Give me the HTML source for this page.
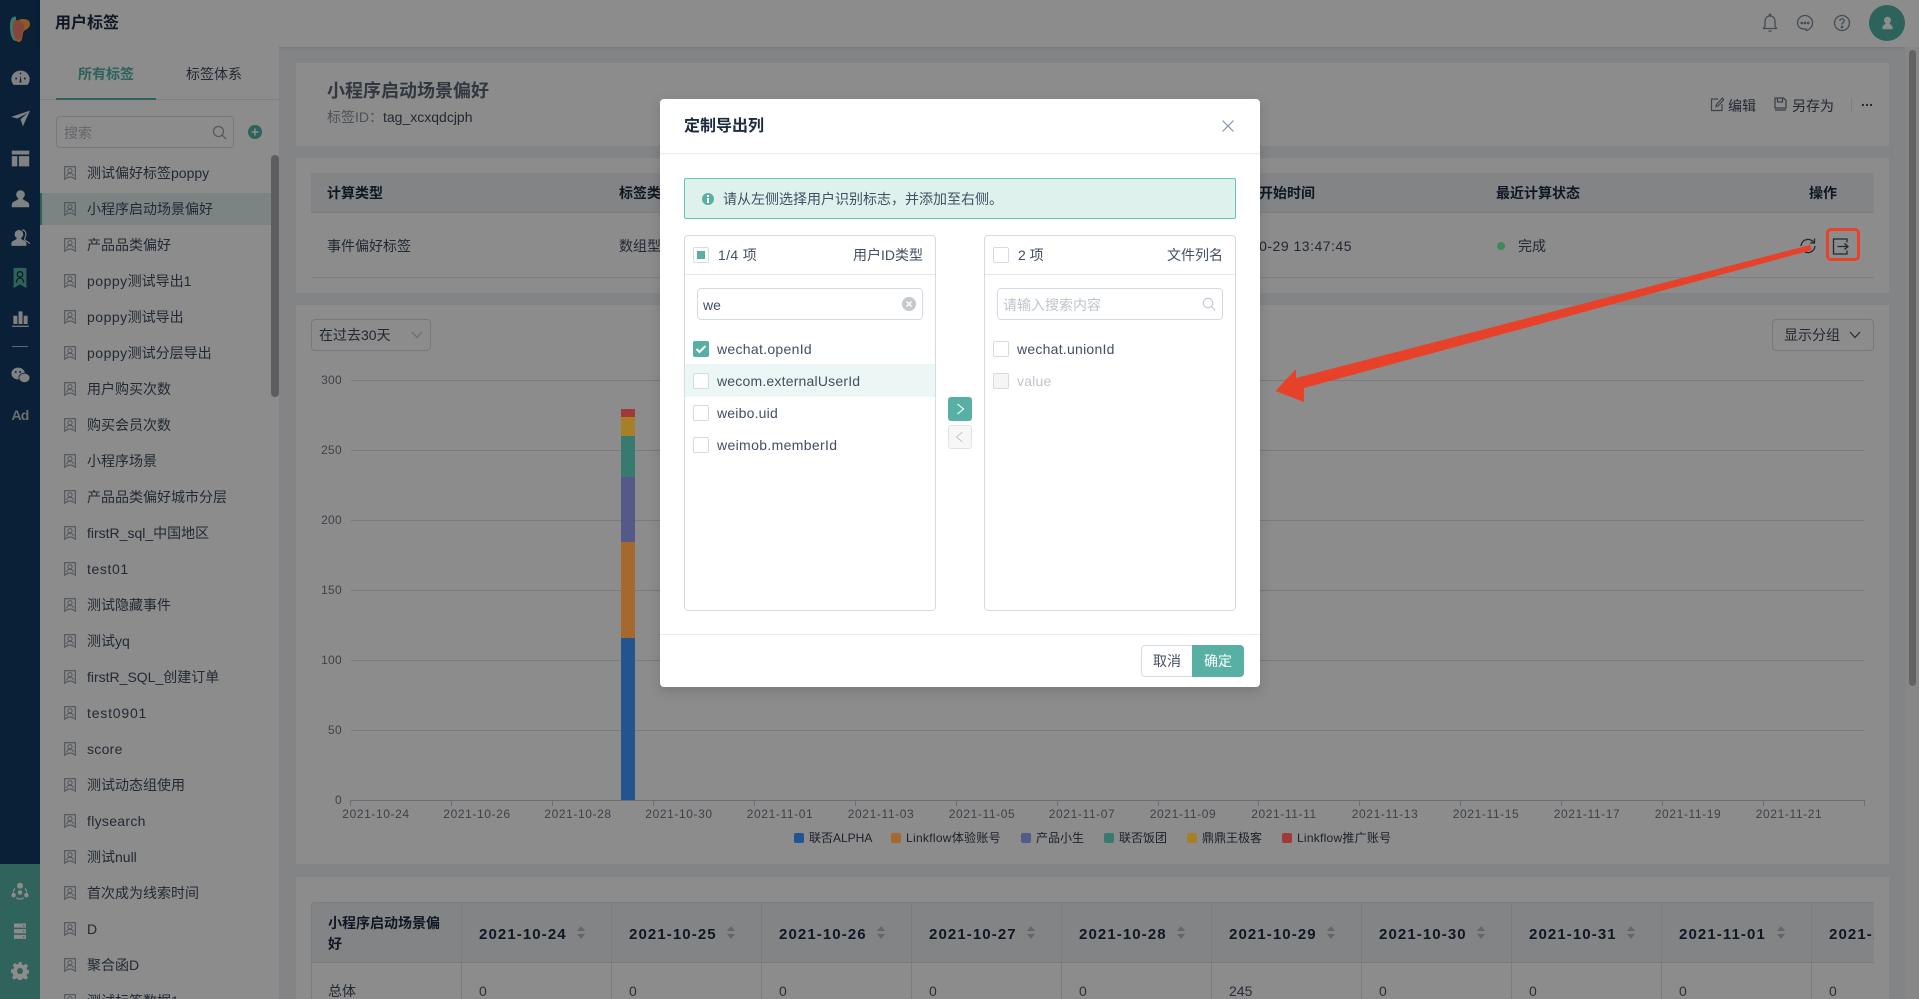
<!DOCTYPE html>
<html lang="zh"><head><meta charset="utf-8"><title>用户标签</title>
<style>
*{box-sizing:border-box}
html,body{margin:0;padding:0;width:1919px;height:999px;overflow:hidden;background:#eef1f5}
body{position:relative;font:14px/20px "Liberation Sans","Noto Sans CJK SC",sans-serif;color:#3f4a5c}
.a{position:absolute}
.t{position:absolute;white-space:nowrap;line-height:20px}
.b{font-weight:700;color:#1c2a3e}
.card{position:absolute;background:#fff}
.li{position:absolute;left:87px;white-space:nowrap;line-height:20px;color:#414d60}
.li span{letter-spacing:.5px}
.ic{position:absolute;left:64px;width:12px;height:14px}
.ax{position:absolute;top:804px;width:80px;text-align:center;font-size:12px;color:#6f7885;letter-spacing:.6px}
.yl{position:absolute;left:302px;width:40px;text-align:right;font-size:12px;color:#6f7885;letter-spacing:.3px;line-height:20px}
.grid{position:absolute;left:351px;width:1513px;height:1px;background:#dcdfe3}
.tick{position:absolute;top:800px;width:1px;height:6px;background:#c4c8ce}
.lg{position:absolute;top:828px;font-size:12px;line-height:20px;color:#333d4c;white-space:nowrap}
.lr{position:absolute;top:833px;width:10px;height:10px;border-radius:2px}
.th{position:absolute;top:902px;height:61px;width:150px;background:#eef1f5;border-left:1px solid #dfe3e8;border-bottom:1px solid #dfe3e8;border-top:1px solid #dfe3e8}
.th span{position:absolute;left:17px;top:22px;font-size:15px;font-weight:700;color:#1c2a3e;letter-spacing:1.1px;white-space:nowrap}
.th i{position:absolute;left:115px;top:23px;width:0;height:0;border:4.5px solid transparent;border-top:0;border-bottom:5px solid #b4b8be}
.th b{position:absolute;left:115px;top:31px;width:0;height:0;border:4.5px solid transparent;border-bottom:0;border-top:5px solid #b4b8be}
.td{position:absolute;top:963px;height:36px;width:150px;border-left:1px solid #dfe3e8}
.td span{position:absolute;left:17px;top:18px;color:#4a5568;line-height:20px}
.chk{position:absolute;width:16px;height:16px;border:1px solid #d5dbe3;border-radius:2px;background:#fff}
.m{color:#434f63}
.sic{position:absolute;left:10.5px;width:19px;height:19px}
</style></head><body>
<svg width="0" height="0" style="position:absolute"><defs>
<symbol id="tag" viewBox="0 0 12 14"><path d="M.7.7h10.6v12.6L8 11.2H4L.7 13.3z" fill="none" stroke="#8f98a5" stroke-width="1.1"/><circle cx="6" cy="4.7" r="2.1" fill="none" stroke="#8f98a5" stroke-width="1"/><path d="M2.5 10.2C3 8 4.5 7.3 6 7.3s3 .7 3.5 2.9" fill="none" stroke="#8f98a5" stroke-width="1"/></symbol>
</defs></svg>

<!-- sidebar -->
<div class="a" style="left:0;top:0;width:40px;height:864px;background:#113b65"></div>
<div class="a" style="left:0;top:864px;width:40px;height:135px;background:#56b4a7"></div>
<svg class="a" style="left:10px;top:16px" width="20" height="27" viewBox="0 0 20 27"><path d="M6 0.500C2 .5 0 3 0 10s1.500 15 6 15z" fill="#6fdcc6"/><path d="M12 3c4 0 8 .5 8 5s-4 5-6 7-.5 11-5 11-5-6-5-11S7 3 12 3z" fill="#ffa444"/><path d="M5 4.500c4-1.500 8 1.500 9 6 .5 2.500-1 3.500-1.500 6-.5 3-1 7-4 7S3 19 3 13c0-3.500 0-7.500 2-8.500z" fill="#f47c6c"/></svg>
<!-- dashboard -->
<svg class="sic" style="top:68.500px" viewBox="0 0 24 24"><path d="M12 2a11 11 0 0 0-9 18h18a11 11 0 0 0-9-18z" fill="#e8ebee"/><path d="M12 8l-1.300 9h2.600z" fill="#113b65"/><circle cx="6.500" cy="12" r="1.200" fill="#113b65"/><circle cx="17.500" cy="12" r="1.200" fill="#113b65"/><circle cx="12" cy="5.500" r="1.100" fill="#113b65"/></svg>
<!-- plane -->
<svg class="sic" style="top:108.500px" viewBox="0 0 24 24"><path d="M0 10L24 2 15 22 12 13 21 5 8 12z" fill="#e8ebee"/></svg>
<!-- table -->
<svg class="sic" style="top:148.500px" viewBox="0 0 24 24"><path d="M1 2h22v5H1zM1 9h7v13H1zM10 9h13v13H10z" fill="#e8ebee"/></svg>
<!-- user -->
<svg class="sic" style="top:188.500px" viewBox="0 0 24 24"><circle cx="12" cy="7" r="5.500" fill="#e8ebee"/><path d="M9 12c0 3-8 3-8 8v3h22v-3c0-5-8-5-8-8z" fill="#e8ebee"/></svg>
<!-- users -->
<svg class="sic" style="top:227.500px" viewBox="0 0 24 24"><circle cx="10" cy="8" r="5.500" fill="#e8ebee"/><path d="M7.500 12.500c0 3-7 3-7 7v3h19v-3c0-4-7-4-7-7z" fill="#e8ebee"/><path d="M14 2.500c4 0 5.500 4 4.500 7.500s-2 3-1 5 5 2 6 5" fill="none" stroke="#e8ebee" stroke-width="1.500"/></svg>
<!-- bookmark -->
<svg class="a" style="left:9px;top:267px" width="22" height="22" viewBox="0 0 24 24"><path d="M5 1h14v22l-7-4-7 4z" fill="#52b5a6"/><circle cx="12" cy="8" r="3" fill="none" stroke="#133" stroke-width="1.400"/><path d="M8 17c0-3 2-5 4-5s4 2 4 5" fill="none" stroke="#133" stroke-width="1.400"/></svg>
<!-- chart -->
<svg class="sic" style="top:308.500px" viewBox="0 0 24 24"><path d="M3 8.500h5V19H3zM9.500 3h5v16h-5zM16 8.500h5V19h-5zM1.500 21h21v1.500h-21z" fill="#e8ebee"/></svg>
<div class="a" style="left:12px;top:346px;width:16px;height:1px;background:#b8c2cc"></div>
<!-- wechat -->
<svg class="sic" style="top:365.500px" viewBox="0 0 24 24"><ellipse cx="9" cy="9.500" rx="8.500" ry="7.500" fill="#e8ebee"/><ellipse cx="17" cy="15" rx="7" ry="6" fill="#e8ebee" stroke="#113b65"/><circle cx="6" cy="7.500" r="1.200" fill="#113b65"/><circle cx="11.500" cy="7.500" r="1.200" fill="#113b65"/></svg>
<div class="t" style="left:11.500px;top:405px;font-weight:700;font-size:14px;letter-spacing:-.8px;color:#c2c8d0">Ad</div>
<!-- bottom icons -->
<svg class="a" style="left:11px;top:882px" width="18" height="18" viewBox="0 0 24 24"><path d="M5.500 8.500A8 8 0 0 0 3 14M18.500 8.500A8 8 0 0 1 21 14M7 21a8 8 0 0 0 10 0" fill="none" stroke="#fff" stroke-width="1.500"/><circle cx="12" cy="5" r="4" fill="#fff"/><circle cx="3.500" cy="17.500" r="3" fill="#fff"/><circle cx="20.500" cy="17.500" r="3" fill="#fff"/><circle cx="12" cy="14" r="3" fill="#fff"/></svg>
<svg class="a" style="left:11px;top:922px" width="18" height="18" viewBox="0 0 24 24"><path d="M4 2h16v5.500H4zM4 9.500h16V15H4zM4 17h16v5.500H4z" fill="#fff"/><circle cx="17" cy="4.800" r="1" fill="#56b4a7"/><circle cx="17" cy="12.300" r="1" fill="#56b4a7"/><circle cx="17" cy="19.800" r="1" fill="#56b4a7"/></svg>
<svg class="a" style="left:11px;top:962px" width="18" height="18" viewBox="0 0 24 24"><path d="M10 0h4l.7 3.500 2.200.9 3-2 2.800 2.800-2 3 .9 2.200 3.400.6v4l-3.400.6-.9 2.200 2 3-2.800 2.800-3-2-2.200.9-.7 3.500h-4l-.7-3.500-2.200-.9-3 2-2.800-2.800 2-3-.9-2.200L0 14v-4l3.400-.6.9-2.200-2-3 2.800-2.800 3 2 2.200-.9z" fill="#fff"/><circle cx="12" cy="12" r="4" fill="#56b4a7"/></svg>

<!-- topbar -->
<div class="a" style="left:40px;top:0;width:1879px;height:47px;background:#fff;box-shadow:0 1px 4px rgba(0,0,0,.12)"></div>
<div class="t b" style="left:55px;top:14px;font-size:16px">用户标签</div>
<svg class="a" style="left:1761px;top:13px" width="18" height="20" viewBox="0 0 18 20" fill="none" stroke="#7f8a99" stroke-width="1.300"><path d="M9 3c-3.500 0-5 2.500-5 5.500v4.500L2.500 15.500h13L14 13V8.500C14 5.500 12.500 3 9 3z"/><path d="M7.500 17.500c.5 1 2.500 1 3 0"/><circle cx="9" cy="2" r=".8" fill="#7f8a99"/></svg>
<svg class="a" style="left:1796px;top:14px" width="18" height="18" viewBox="0 0 18 18" fill="none" stroke="#7f8a99" stroke-width="1.300"><path d="M9 1.500a7.500 7.500 0 0 1 7.500 7.500c0 4-3 6.500-6 7.500l-.5-1.500C5 15.500 1.500 13 1.500 9A7.500 7.500 0 0 1 9 1.500z"/><circle cx="5.800" cy="9" r=".7" fill="#7f8a99"/><circle cx="9" cy="9" r=".7" fill="#7f8a99"/><circle cx="12.200" cy="9" r=".7" fill="#7f8a99"/></svg>
<svg class="a" style="left:1833px;top:14px" width="18" height="18" viewBox="0 0 18 18" fill="none" stroke="#7f8a99" stroke-width="1.300"><circle cx="9" cy="9" r="7.500"/><path d="M6.800 7c0-3 4.400-3 4.400-.2 0 1.800-2.200 1.800-2.200 3.700"/><circle cx="9" cy="13" r=".7" fill="#7f8a99"/></svg>
<div class="a" style="left:1869px;top:5px;width:36px;height:36px;border-radius:50%;background:#52b5a6"></div>
<svg class="a" style="left:1881px;top:16px" width="13" height="14" viewBox="0 0 16 18"><circle cx="8" cy="5.500" r="4.500" fill="#fff"/><path d="M5.500 9C5.500 11 1.500 11.500 1.500 14.500V17h13v-2.500C14.500 11.500 10.500 11 10.500 9z" fill="#fff"/></svg>

<!-- left panel -->
<div class="a" style="left:40px;top:47px;width:239px;height:952px;background:#fff"></div>
<div class="t" style="left:78px;top:64px;color:#52b5a6;font-weight:700">所有标签</div>
<div class="t" style="left:186px;top:64px;color:#414d60">标签体系</div>
<div class="a" style="left:40px;top:99px;width:239px;height:1px;background:#e4e7eb"></div>
<div class="a" style="left:56px;top:98px;width:100px;height:2px;background:#52b5a6"></div>
<div class="a" style="left:56px;top:116px;width:178px;height:32px;border:1px solid #d5dbe3;border-radius:4px"></div>
<div class="t" style="left:64px;top:123px;color:#b5bac2">搜索</div>
<svg class="a" style="left:212px;top:125px" width="15" height="15" viewBox="0 0 15 15" fill="none" stroke="#96a0ac" stroke-width="1.200"><circle cx="6.500" cy="6.500" r="5"/><path d="M10.200 10.200l4 4"/></svg>
<div class="a" style="left:248px;top:125px;width:14px;height:14px;border-radius:50%;background:#52b5a6"></div>
<svg class="a" style="left:248px;top:125px" width="14" height="14" viewBox="0 0 14 14"><path d="M7 3.500v7M3.500 7h7" stroke="#fff" stroke-width="1.500"/></svg>
<div class="a" style="left:40px;top:193px;width:231px;height:32px;background:#dff1ee"></div>
<div class="a" style="left:40px;top:193px;width:2px;height:32px;background:#52b5a6"></div>
<div class="a" style="left:271px;top:155px;width:8px;height:242px;border-radius:4px;background:#acacac"></div>

<svg class="ic" style="top:166px"><use href="#tag"/></svg><div class="li" style="top:163px">测试偏好标签poppy</div>
<svg class="ic" style="top:202px"><use href="#tag"/></svg><div class="li" style="top:199px">小程序启动场景偏好</div>
<svg class="ic" style="top:238px"><use href="#tag"/></svg><div class="li" style="top:235px">产品品类偏好</div>
<svg class="ic" style="top:274px"><use href="#tag"/></svg><div class="li" style="top:271px"><span>poppy</span>测试导出<span>1</span></div>
<svg class="ic" style="top:310px"><use href="#tag"/></svg><div class="li" style="top:307px"><span>poppy</span>测试导出</div>
<svg class="ic" style="top:346px"><use href="#tag"/></svg><div class="li" style="top:343px"><span>poppy</span>测试分层导出</div>
<svg class="ic" style="top:382px"><use href="#tag"/></svg><div class="li" style="top:379px">用户购买次数</div>
<svg class="ic" style="top:418px"><use href="#tag"/></svg><div class="li" style="top:415px">购买会员次数</div>
<svg class="ic" style="top:454px"><use href="#tag"/></svg><div class="li" style="top:451px">小程序场景</div>
<svg class="ic" style="top:490px"><use href="#tag"/></svg><div class="li" style="top:487px">产品品类偏好城市分层</div>
<svg class="ic" style="top:526px"><use href="#tag"/></svg><div class="li" style="top:523px">firstR_sql_中国地区</div>
<svg class="ic" style="top:562px"><use href="#tag"/></svg><div class="li" style="top:559px;letter-spacing:.6px">test01</div>
<svg class="ic" style="top:598px"><use href="#tag"/></svg><div class="li" style="top:595px">测试隐藏事件</div>
<svg class="ic" style="top:634px"><use href="#tag"/></svg><div class="li" style="top:631px">测试yq</div>
<svg class="ic" style="top:670px"><use href="#tag"/></svg><div class="li" style="top:667px">firstR_SQL_创建订单</div>
<svg class="ic" style="top:706px"><use href="#tag"/></svg><div class="li" style="top:703px;letter-spacing:.8px">test0901</div>
<svg class="ic" style="top:742px"><use href="#tag"/></svg><div class="li" style="top:739px;letter-spacing:.3px">score</div>
<svg class="ic" style="top:778px"><use href="#tag"/></svg><div class="li" style="top:775px">测试动态组使用</div>
<svg class="ic" style="top:814px"><use href="#tag"/></svg><div class="li" style="top:811px;letter-spacing:.3px">flysearch</div>
<svg class="ic" style="top:850px"><use href="#tag"/></svg><div class="li" style="top:847px">测试null</div>
<svg class="ic" style="top:886px"><use href="#tag"/></svg><div class="li" style="top:883px">首次成为线索时间</div>
<svg class="ic" style="top:922px"><use href="#tag"/></svg><div class="li" style="top:919px">D</div>
<svg class="ic" style="top:958px"><use href="#tag"/></svg><div class="li" style="top:955px">聚合函D</div>
<svg class="ic" style="top:994px"><use href="#tag"/></svg><div class="li" style="top:991px">测试标签数据1</div>

<!-- page scrollbar -->
<div class="a" style="left:1905px;top:47px;width:14px;height:952px;background:#f6f6f6"></div>
<div class="a" style="left:1909px;top:50px;width:7px;height:636px;border-radius:4px;background:#b5b5b5"></div>

<!-- card 1 -->
<div class="card" style="left:296px;top:63px;width:1593px;height:83px"></div>
<div class="t b" style="left:327px;top:80px;font-size:18px;line-height:22px;color:#5b6676;font-weight:700">小程序启动场景偏好</div>
<div class="t" style="left:327px;top:107px;color:#8d96a3">标签ID：<span style="color:#3f4a5c">tag_xcxqdcjph</span></div>
<svg class="a" style="left:1710px;top:97px" width="14" height="15" viewBox="0 0 14 15" fill="none" stroke="#6f7a88" stroke-width="1.200"><path d="M8 2H1.500v11.500H12V7"/><path d="M12.500 1L6.500 7.500 6 9.500l2-.5 5.500-6z"/></svg>
<div class="t" style="left:1728px;top:96px;color:#3f4a5c">编辑</div>
<svg class="a" style="left:1774px;top:97px" width="13" height="14" viewBox="0 0 13 14" fill="none" stroke="#6f7a88" stroke-width="1.300"><path d="M1 1h8.500L12 3.500V11H1z"/><path d="M3.500 1v4h5V1"/><path d="M1 13h11"/></svg>
<div class="t" style="left:1792px;top:96px;color:#3f4a5c">另存为</div>
<div class="a" style="left:1851px;top:98px;width:1px;height:14px;background:#e2e5e9"></div>
<div class="t" style="left:1861px;top:91px;font-weight:700;letter-spacing:.2px;color:#3f4a5c">...</div>

<!-- card 2 -->
<div class="card" style="left:296px;top:158px;width:1593px;height:135px"></div>
<div class="a" style="left:311px;top:173px;width:1563px;height:40px;background:#eef1f5;border-bottom:1px solid #dfe3e8"></div>
<div class="a" style="left:311px;top:277px;width:1563px;height:1px;background:#e3e6ea"></div>
<div class="t b" style="left:327px;top:183px">计算类型</div>
<div class="t b" style="left:619px;top:183px">标签类型</div>
<div class="t b" style="left:1203px;top:183px">最近计算开始时间</div>
<div class="t b" style="left:1496px;top:183px">最近计算状态</div>
<div class="t b" style="left:1809px;top:183px">操作</div>
<div class="t" style="left:327px;top:236px">事件偏好标签</div>
<div class="t" style="left:619px;top:236px">数组型</div>
<div class="t" style="left:1152px;top:236px;width:200px;text-align:right;letter-spacing:.5px">2021-10-29 13:47:45</div>
<div class="t" style="left:1518px;top:236px">完成</div>
<svg class="a" style="left:1799px;top:237px" width="18" height="18" viewBox="0 0 18 18" fill="none" stroke="#3f4a5c" stroke-width="1.300"><path d="M14.800 5.500A7 7 0 0 0 2 9"/><path d="M3.200 12.500A7 7 0 0 0 16 9"/><path d="M15.500 1.500v4.500H11"/></svg>
<svg class="a" style="left:1832px;top:238px" width="17" height="17" viewBox="0 0 17 17" fill="none" stroke="#3f4a5c" stroke-width="1.300"><path d="M15 4.500V1H1.500v15H15v-3.500"/><path d="M5.500 8.500h10.500M12.500 5.500l3.500 3-3.500 3"/></svg>

<!-- card 3 -->
<div class="card" style="left:296px;top:305px;width:1593px;height:559px"></div>
<div class="a" style="left:311px;top:319px;width:120px;height:32px;border:1px solid #d5dbe3;border-radius:4px"></div>
<div class="t" style="left:319px;top:325px">在过去30天</div>
<svg class="a" style="left:411px;top:331px" width="12" height="8" viewBox="0 0 12 8" fill="none" stroke="#c0c5cc" stroke-width="1.200"><path d="M1 1l5 5.500L11 1"/></svg>
<div class="a" style="left:1772px;top:319px;width:102px;height:32px;border:1px solid #d5dbe3;border-radius:4px"></div>
<div class="t" style="left:1784px;top:325px">显示分组</div>
<svg class="a" style="left:1849px;top:331px" width="12" height="8" viewBox="0 0 12 8" fill="none" stroke="#3f4a5c" stroke-width="1.200"><path d="M1 1l5 5.500L11 1"/></svg>

<div class="grid" style="top:380px"></div><div class="grid" style="top:450px"></div><div class="grid" style="top:520px"></div><div class="grid" style="top:590px"></div><div class="grid" style="top:660px"></div><div class="grid" style="top:730px"></div>
<div class="grid" style="top:800px;left:350px;width:1514px;background:#c4c8ce"></div>
<div class="yl" style="top:370px">300</div><div class="yl" style="top:440px">250</div><div class="yl" style="top:510px">200</div><div class="yl" style="top:580px">150</div><div class="yl" style="top:650px">100</div><div class="yl" style="top:720px">50</div><div class="yl" style="top:790px">0</div>
<div class="tick" style="left:350px"></div><div class="tick" style="left:451px"></div><div class="tick" style="left:552px"></div><div class="tick" style="left:653px"></div><div class="tick" style="left:754px"></div><div class="tick" style="left:855px"></div><div class="tick" style="left:956px"></div><div class="tick" style="left:1057px"></div><div class="tick" style="left:1158px"></div><div class="tick" style="left:1258px"></div><div class="tick" style="left:1359px"></div><div class="tick" style="left:1460px"></div><div class="tick" style="left:1561px"></div><div class="tick" style="left:1662px"></div><div class="tick" style="left:1763px"></div><div class="tick" style="left:1864px"></div>
<div class="ax" style="left:336px">2021-10-24</div><div class="ax" style="left:437px">2021-10-26</div><div class="ax" style="left:538px">2021-10-28</div><div class="ax" style="left:639px">2021-10-30</div><div class="ax" style="left:740px">2021-11-01</div><div class="ax" style="left:841px">2021-11-03</div><div class="ax" style="left:942px">2021-11-05</div><div class="ax" style="left:1042px">2021-11-07</div><div class="ax" style="left:1143px">2021-11-09</div><div class="ax" style="left:1244px">2021-11-11</div><div class="ax" style="left:1345px">2021-11-13</div><div class="ax" style="left:1446px">2021-11-15</div><div class="ax" style="left:1547px">2021-11-17</div><div class="ax" style="left:1648px">2021-11-19</div><div class="ax" style="left:1749px">2021-11-21</div>
<div class="lg" style="left:809px">联否ALPHA</div><div class="lg" style="left:906px;letter-spacing:.3px">Linkflow体验账号</div><div class="lg" style="left:1036px">产品小生</div><div class="lg" style="left:1119px">联否饭团</div><div class="lg" style="left:1202px">鼎鼎王极客</div><div class="lg" style="left:1297px;letter-spacing:.25px">Linkflow推广账号</div>

<!-- card 4 -->
<div class="card" style="left:296px;top:877px;width:1593px;height:122px"></div>
<div class="a" style="left:311px;top:902px;width:151px;height:61px;background:#eef1f5;border:1px solid #dfe3e8;border-right:0;border-radius:4px 0 0 0"></div>
<div class="t b" style="left:328px;top:913px;line-height:21px;width:125px;white-space:normal">小程序启动场景偏好</div>
<div class="a" style="left:311px;top:963px;width:1px;height:36px;background:#dfe3e8"></div>
<div class="t" style="left:328px;top:981px">总体</div>
<div class="a" style="left:0;top:0;width:1874px;height:999px;overflow:hidden">
<div class="th" style="left:461px"><span>2021-10-24</span><i></i><b></b></div><div class="td" style="left:461px"><span>0</span></div>
<div class="th" style="left:611px"><span>2021-10-25</span><i></i><b></b></div><div class="td" style="left:611px"><span>0</span></div>
<div class="th" style="left:761px"><span>2021-10-26</span><i></i><b></b></div><div class="td" style="left:761px"><span>0</span></div>
<div class="th" style="left:911px"><span>2021-10-27</span><i></i><b></b></div><div class="td" style="left:911px"><span>0</span></div>
<div class="th" style="left:1061px"><span>2021-10-28</span><i></i><b></b></div><div class="td" style="left:1061px"><span>0</span></div>
<div class="th" style="left:1211px"><span>2021-10-29</span><i></i><b></b></div><div class="td" style="left:1211px"><span>245</span></div>
<div class="th" style="left:1361px"><span>2021-10-30</span><i></i><b></b></div><div class="td" style="left:1361px"><span>0</span></div>
<div class="th" style="left:1511px"><span>2021-10-31</span><i></i><b></b></div><div class="td" style="left:1511px"><span>0</span></div>
<div class="th" style="left:1661px"><span>2021-11-01</span><i></i><b></b></div><div class="td" style="left:1661px"><span>0</span></div>
<div class="th" style="left:1811px"><span>2021-11-02</span><i></i><b></b></div><div class="td" style="left:1811px"><span>0</span></div>
</div>

<!-- overlay -->
<div class="a" style="left:0;top:0;width:1919px;height:999px;background:rgba(0,0,0,.45)"></div>

<!-- chart colours (above dim layer) -->
<div class="a" style="left:621px;top:638px;width:14px;height:162px;background:#245490"></div>
<div class="a" style="left:621px;top:542px;width:14px;height:96px;background:#a5692e"></div>
<div class="a" style="left:621px;top:477px;width:14px;height:65px;background:#545a88"></div>
<div class="a" style="left:621px;top:436px;width:14px;height:41px;background:#387a70"></div>
<div class="a" style="left:621px;top:417px;width:14px;height:19px;background:#a67f26"></div>
<div class="a" style="left:621px;top:409px;width:14px;height:8px;background:#a03a3a"></div>
<div class="lr" style="left:794px;background:#245490"></div><div class="lr" style="left:891px;background:#a5692e"></div><div class="lr" style="left:1021px;background:#545a88"></div><div class="lr" style="left:1104px;background:#387a70"></div><div class="lr" style="left:1187px;background:#a67f26"></div><div class="lr" style="left:1282px;background:#a03a3a"></div>
<div class="a" style="left:1497px;top:242px;width:8px;height:8px;border-radius:50%;background:#3f8a55"></div>

<!-- annotation -->
<div class="a" style="left:1826px;top:228px;width:34px;height:33px;border:3px solid #e8412a;border-radius:5px"></div>
<svg class="a" style="left:0;top:0" width="1919" height="999"><polygon points="1810,245 1296,378 1296,369 1275.500,391 1304,402 1304,388 1812,250" fill="#e8412a"/></svg>

<!-- modal -->
<div class="a" style="left:660px;top:99px;width:600px;height:588px;background:#fff;border-radius:4px;box-shadow:0 4px 12px rgba(0,0,0,.15)"></div>
<div class="t" style="left:684px;top:117px;font-size:16px;font-weight:700;color:#1c2a3e">定制导出列</div>
<svg class="a" style="left:1222px;top:120px" width="12" height="12" viewBox="0 0 12 12" stroke="#8a97a8" stroke-width="1.200"><path d="M.5.500l11 11M11.500.500l-11 11"/></svg>
<div class="a" style="left:660px;top:153px;width:600px;height:1px;background:#e8ebef"></div>

<div class="a" style="left:684px;top:178px;width:552px;height:41px;background:#dff1ec;border:1px solid #5fc9b5;border-radius:2px"></div>
<div class="a" style="left:702px;top:192.500px;width:12px;height:12px;border-radius:50%;background:#57b0a3"></div>
<div class="a" style="left:707px;top:194.500px;width:2px;height:2px;background:#fff"></div>
<div class="a" style="left:707px;top:198px;width:2px;height:4.500px;background:#fff"></div>
<div class="t m" style="left:723px;top:189px">请从左侧选择用户识别标志，并添加至右侧。</div>

<!-- left transfer -->
<div class="a" style="left:684px;top:235px;width:252px;height:376px;border:1px solid #d5dbe3;border-radius:4px"></div>
<div class="a" style="left:685px;top:274px;width:250px;height:1px;background:#e4e7ec"></div>
<div class="chk" style="left:693px;top:247px"></div>
<div class="a" style="left:697px;top:251px;width:8px;height:8px;background:#57b0a3"></div>
<div class="t m" style="left:718px;top:245px;letter-spacing:.35px">1/4 项</div>
<div class="t m" style="left:822px;top:245px;width:101px;text-align:right">用户ID类型</div>
<div class="a" style="left:697px;top:288px;width:226px;height:32px;border:1px solid #d5dbe3;border-radius:4px"></div>
<div class="t m" style="left:703px;top:295px">we</div>
<div class="a" style="left:902px;top:297px;width:14px;height:14px;border-radius:50%;background:#c5c8cd"></div>
<svg class="a" style="left:902px;top:297px" width="14" height="14" viewBox="0 0 14 14" stroke="#fff" stroke-width="1.300"><path d="M4.500 4.500l5 5M9.500 4.500l-5 5"/></svg>
<div class="a" style="left:685px;top:364px;width:250px;height:33px;background:#ecf6f4"></div>
<div class="chk" style="left:693px;top:341px;background:#57b0a3;border-color:#57b0a3"></div>
<svg class="a" style="left:693px;top:341px" width="16" height="16" viewBox="0 0 16 16" fill="none" stroke="#fff" stroke-width="2"><path d="M3.500 8l3 3 6-6"/></svg>
<div class="t m" style="left:717px;top:339px;letter-spacing:.3px">wechat.openId</div>
<div class="chk" style="left:693px;top:373px"></div>
<div class="t m" style="left:717px;top:371px;letter-spacing:.2px">wecom.externalUserId</div>
<div class="chk" style="left:693px;top:405px"></div>
<div class="t m" style="left:717px;top:403px;letter-spacing:.2px">weibo.uid</div>
<div class="chk" style="left:693px;top:437px"></div>
<div class="t m" style="left:717px;top:435px;letter-spacing:.35px">weimob.memberId</div>

<!-- middle buttons -->
<div class="a" style="left:948px;top:397px;width:24px;height:24px;background:#57b0a3;border-radius:3px"></div>
<svg class="a" style="left:948px;top:397px" width="24" height="24" viewBox="0 0 24 24" fill="none" stroke="#fff" stroke-width="1.100"><path d="M9.500 7l6 5-6 5"/></svg>
<div class="a" style="left:948px;top:425px;width:24px;height:24px;background:#f7f7f7;border:1px solid #dfe3e8;border-radius:3px"></div>
<svg class="a" style="left:948px;top:425px" width="24" height="24" viewBox="0 0 24 24" fill="none" stroke="#c4c8ce" stroke-width="1.100"><path d="M14.500 7l-6 5 6 5"/></svg>

<!-- right transfer -->
<div class="a" style="left:984px;top:235px;width:252px;height:376px;border:1px solid #d5dbe3;border-radius:4px"></div>
<div class="a" style="left:985px;top:274px;width:250px;height:1px;background:#e4e7ec"></div>
<div class="chk" style="left:993px;top:247px"></div>
<div class="t m" style="left:1018px;top:245px">2 项</div>
<div class="t m" style="left:1122px;top:245px;width:101px;text-align:right">文件列名</div>
<div class="a" style="left:997px;top:288px;width:226px;height:32px;border:1px solid #d5dbe3;border-radius:4px"></div>
<div class="t" style="left:1003px;top:295px;color:#bfc4cc">请输入搜索内容</div>
<svg class="a" style="left:1202px;top:297px" width="14" height="14" viewBox="0 0 14 14" fill="none" stroke="#c4c8ce" stroke-width="1.100"><circle cx="6" cy="6" r="4.800"/><path d="M9.500 9.500l4 4"/></svg>
<div class="chk" style="left:993px;top:341px"></div>
<div class="t m" style="left:1017px;top:339px;letter-spacing:.25px">wechat.unionId</div>
<div class="chk" style="left:993px;top:373px;background:#f5f5f5"></div>
<div class="t" style="left:1017px;top:371px;color:#c0c5cc;letter-spacing:.2px">value</div>

<!-- footer -->
<div class="a" style="left:660px;top:634px;width:600px;height:1px;background:#e8ebef"></div>
<div class="a" style="left:1141px;top:645px;width:52px;height:32px;background:#fff;border:1px solid #d5dbe3;border-radius:4px 0 0 4px"></div>
<div class="t m" style="left:1153px;top:651px">取消</div>
<div class="a" style="left:1192px;top:645px;width:52px;height:32px;background:#57b0a3;border-radius:0 4px 4px 0"></div>
<div class="t" style="left:1204px;top:651px;color:#fff">确定</div>
</body></html>
